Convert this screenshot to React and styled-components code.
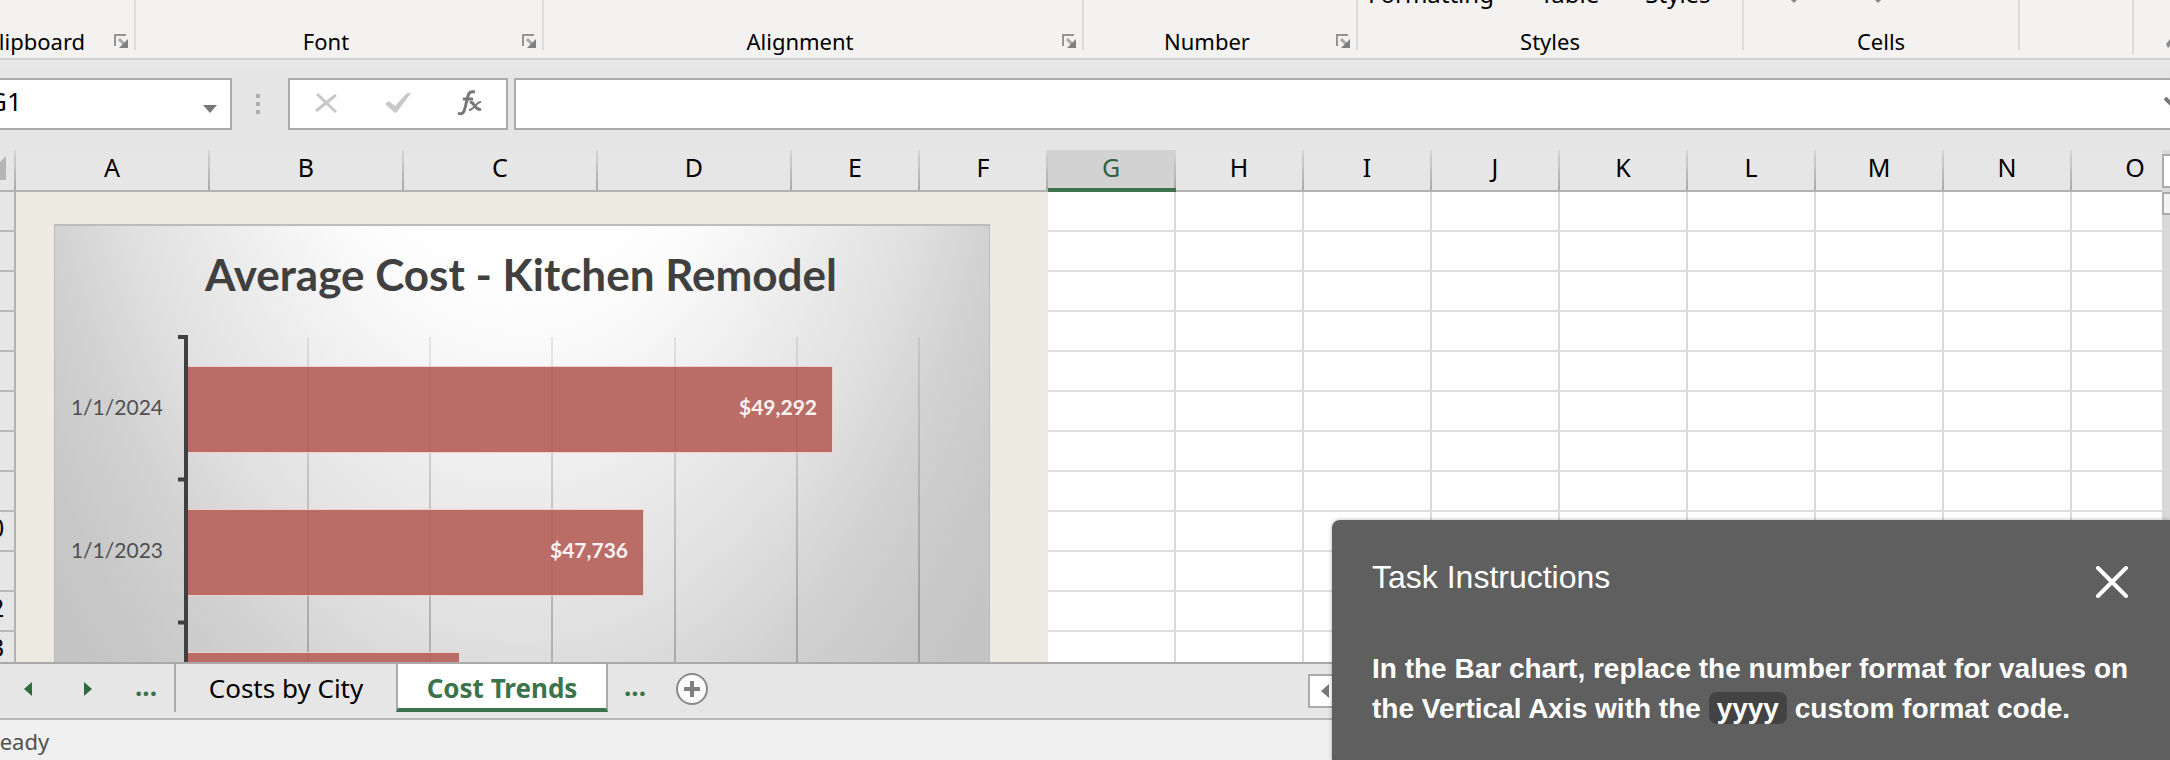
import React from "react";
import styled, { createGlobalStyle, css } from "styled-components";

const GlobalStyle = createGlobalStyle`
  *, *::before, *::after { box-sizing: border-box; }
  html, body, #root { height: 100%; }
  body { margin: 0; overflow: hidden; background: #e6e6e6; }
  body, button, input { font-family: "Noto Sans", sans-serif; color: #000; }
  button { border: 0; padding: 0; background: none; }
  svg { display: block; flex: none; }
`;

const Screen = styled.main`
  position: relative;
  display: flex;
  flex-direction: column;
  height: 100vh;
  overflow: hidden;
`;

const Ribbon = styled.header`
  display: flex;
  flex: none;
  height: 60px;
  background: #f3f2f1;
  border-bottom: 2px solid #d2d2d2;
  overflow: hidden;
`;

const Group = styled.section`
  position: relative;
  flex: none;
  width: ${(p) => p.$width}px;
  height: ${(p) => (p.$tall ? 54 : 50)}px;
  margin-left: ${(p) => (p.$clipped ? -38 : 0)}px;
  border-right: 2px solid #dcdcdc;
  display: flex;
  align-items: flex-end;
`;

const GroupTitle = styled.h2`
  flex: 1;
  margin: 0 0 -6px;
  padding-right: ${(p) => (p.$launcher ? 6 : 0)}px;
  font-size: 22px;
  font-weight: 400;
  line-height: 30px;
  text-align: center;
`;

const Launcher = styled.button`
  width: 20px;
  height: 16px;
  display: flex;
`;

const CommandRow = styled.div`
  position: absolute;
  left: 10px;
  bottom: 40px;
  display: flex;
  gap: 46px;
`;

const Command = styled.button`
  font-size: 24px;
  line-height: 32px;
`;

const MenuMarks = styled.div`
  position: absolute;
  top: 0;
  left: 46px;
  display: flex;
  gap: 76px;
`;

const RibbonEnd = styled.div`
  flex: 1;
  display: flex;
  justify-content: flex-end;
  align-items: flex-end;
  padding-bottom: 10px;
`;

const FormulaBar = styled.div`
  display: flex;
  flex: none;
  height: 90px;
  padding: 18px 0 20px;
  background: linear-gradient(#e9e9e9, #e5e5e5 16px);
`;

const fieldBox = css`
  height: 52px;
  background: #fff;
  border: 2px solid #ababab;
`;

const NameBox = styled.div`
  ${fieldBox}
  flex: none;
  width: 256px;
  margin-left: -24px;
  padding: 0 12px 0 10px;
  display: flex;
  align-items: center;
  justify-content: space-between;
`;

const NameInput = styled.input`
  width: 140px;
  height: 40px;
  margin-bottom: 6px;
  padding: 0;
  border: 0;
  outline: 0;
  background: none;
  font-size: 26px;
`;

const PlainButton = styled.button`
  display: flex;
  align-items: center;
  justify-content: center;
`;

const Grip = styled.div`
  flex: none;
  width: 56px;
  padding-right: 4px;
  display: flex;
  align-items: center;
  justify-content: center;
`;

const EntryButtons = styled.div`
  ${fieldBox}
  flex: none;
  width: 220px;
  padding-bottom: 2px;
  display: grid;
  grid-template-columns: repeat(3, 1fr);
`;

const FormulaField = styled.div`
  ${fieldBox}
  flex: 1;
  margin: 0 -20px 0 6px;
  display: flex;
`;

const FormulaInput = styled.input`
  flex: 1;
  border: 0;
  outline: 0;
  background: none;
  font-size: 26px;
`;

const Workspace = styled.div`
  position: relative;
  flex: 1;
  min-height: 0;
  display: flex;
  overflow: hidden;
  border-bottom: 2px solid #a9a9a9;
`;

const SheetViewport = styled.div`
  position: relative;
  flex: 1;
  min-width: 0;
  overflow: hidden;
`;

const Sheet = styled.table`
  border-collapse: separate;
  border-spacing: 0;
  table-layout: fixed;
  width: 2238px;
  margin-left: -38px;
  background: #fff;
`;

const ColumnHead = styled.th`
  height: 42px;
  padding: 0 2px ${(p) => (p.$active ? 4 : 6)}px 0;
  font-size: 25px;
  font-weight: 400;
  line-height: 34px;
  color: ${(p) => (p.$active ? "#2f6340" : "#000")};
  background: linear-gradient(#d6d6d6, #a8a8a8) right / 2px 100% no-repeat,
    ${(p) => (p.$active ? "#d2d2d2" : "#e6e6e6")};
  border-bottom: ${(p) => (p.$active ? "4px solid #3b734c" : "2px solid #b3b3b3")};
`;

const RowHead = styled.th`
  height: 40px;
  padding: 0 0 8px 4px;
  font-size: 25px;
  font-weight: 400;
  line-height: 30px;
  background: #e6e6e6;
  border-right: 2px solid #b3b3b3;
  border-bottom: 2px solid #b8b8b8;
`;

const Cell = styled.td`
  height: 40px;
  padding: 0;
  ${(p) =>
    p.$shaded
      ? css`
          background: #edeae2;
        `
      : css`
          border-right: 2px solid #dadada;
          border-bottom: 2px solid #dedede;
        `}
`;

const ChartFrame = styled.figure`
  position: absolute;
  left: 54px;
  top: 74px;
  width: 936px;
  height: 560px;
  margin: 0;
  border: 2px solid #bcbcbc;
  border-width: 2px 1px;
  background: radial-gradient(
    ellipse 650px 1240px at 50% -465px,
    #fff 40%,
    #fafafa 47%,
    #f3f3f3 53%,
    #eaeaea 61%,
    #e0e0e0 71%,
    #d2d2d2 81%,
    #c8c8c8 92%,
    #c4c4c4 100%
  );
`;

const ChartTitle = styled.text`
  font: 700 44px Lato, sans-serif;
  fill: #404040;
  text-anchor: middle;
`;

const AxisLabel = styled.text`
  font: 400 21px Lato, sans-serif;
  fill: #505050;
  text-anchor: end;
`;

const BarLabel = styled.text`
  font: 700 21px Lato, sans-serif;
  fill: #fdf3f2;
  text-anchor: end;
`;

const ScrollColumn = styled.div`
  flex: none;
  width: 8px;
  overflow: hidden;
  background: #d9d9d9;
  padding-top: 4px;
  display: flex;
  flex-direction: column;
  gap: 4px;
`;

const ScrollPart = styled.button`
  flex: none;
  width: 34px;
  height: ${(p) => p.$height}px;
  background: ${(p) => (p.$thumb ? "#f3f3f3" : "#fff")};
  border: 2px solid #ababab;
`;

const TabBar = styled.nav`
  display: flex;
  flex: none;
  height: 56px;
  padding: 0 0 6px 14px;
  background: #e6e6e6;
  border-bottom: 2px solid #b8b8b8;
`;

const TabArrow = styled(PlainButton)`
  width: ${(p) => p.$width}px;
  height: 50px;
`;

const More = styled.button`
  width: ${(p) => p.$width}px;
  padding: 0 ${(p) => p.$end || 0}px 4px 0;
  color: #3b734c;
  font-size: 26px;
  font-weight: 700;
  line-height: 44px;
`;

const Tab = styled.button`
  flex: none;
  width: ${(p) => p.$width}px;
  height: 48px;
  font-size: 26px;
  line-height: 40px;
  border-left: 2px solid #ababab;
  ${(p) =>
    p.$active &&
    css`
      height: 50px;
      margin-top: -2px;
      padding-top: 6px;
      background: #fff;
      color: #3b734c;
      font-weight: 700;
      border-right: 2px solid #ababab;
      border-bottom: 4px solid #3b734c;
    `}
`;

const TabSpacer = styled.div`
  flex: 1;
`;

const HorizontalScroll = styled.div`
  flex: none;
  width: 862px;
  padding-top: 10px;
`;

const ScrollLeft = styled(PlainButton)`
  width: 34px;
  height: 34px;
  background: #fff;
  border: 2px solid #ababab;
`;

const StatusBar = styled.footer`
  flex: none;
  height: 40px;
  padding-top: 4px;
  background: #f0f0f0;
  color: #505050;
  font-size: 22px;
  line-height: 34px;
`;

const StatusText = styled.span`
  display: block;
  margin-left: -14px;
`;

const Panel = styled.aside`
  position: absolute;
  right: 0;
  bottom: 0;
  width: 838px;
  height: 240px;
  padding: 36px 42px 0 40px;
  background: #5f5f5f;
  border-top-left-radius: 8px;
  box-shadow: 0 0 4px rgba(0, 0, 0, 0.3);
  color: #fff;
  font-family: "Liberation Sans", Arial, sans-serif;
`;

const PanelHead = styled.div`
  display: flex;
  justify-content: space-between;
  height: 93px;
`;

const PanelTitle = styled.h1`
  margin: 0;
  font-size: 32px;
  font-weight: 400;
  line-height: 42px;
`;

const CloseButton = styled(PlainButton)`
  width: 32px;
  height: 52px;
`;

const Instruction = styled.p`
  margin: 0;
  font-size: 28px;
  font-weight: 700;
  line-height: 40px;
  white-space: nowrap;
`;

const Code = styled.code`
  display: inline-block;
  height: 32px;
  padding: 0 8px;
  line-height: 34px;
  border-radius: 8px;
  background: #434343;
  font-family: inherit;
`;

const LauncherIcon = () => (
  <svg width="14" height="14" viewBox="0 0 14 14">
    <path d="M1 12V1h11" fill="none" stroke="#949494" strokeWidth="2" />
    <path d="M5 5l5 5" stroke="#a8a8a8" strokeWidth="3" />
    <path d="M14 5v9H5z" fill="#808080" />
  </svg>
);

const groups = [
  { title: "Clipboard", width: 174, clipped: true, launcher: true },
  { title: "Font", width: 408, launcher: true },
  { title: "Alignment", width: 540, launcher: true },
  { title: "Number", width: 274, launcher: true },
  { title: "Styles", width: 386, commands: ["Formatting", "Table", "Styles"] },
  { title: "Cells", width: 276, marks: true },
  { title: "", width: 114, tall: true },
];

const columns = [..."ABCDEFGHIJKLMNO"].map((name, i) => ({
  name,
  width: i < 4 ? 194 : 128,
}));
const rows = Array.from({ length: 12 }, (_, i) => i + 2);

const AXIS = 132;
const bars = [
  { date: "1/1/2024", value: "$49,292", y: 143, end: 778 },
  { date: "1/1/2023", value: "$47,736", y: 286, end: 589 },
  { y: 429, end: 405 },
];

function CostChart() {
  return (
    <ChartFrame>
      <svg width="934" height="556" viewBox="1 2 934 556" role="img" aria-label="Average Cost - Kitchen Remodel">
        <defs>
          <linearGradient id="gridline" x1="0" y1="0" x2="0" y2="1">
            <stop offset="0" stopColor="#000" stopOpacity="0.08" />
            <stop offset="0.600" stopColor="#000" stopOpacity="0.2" />
            <stop offset="1" stopColor="#000" stopOpacity="0.24" />
          </linearGradient>
        </defs>
        <ChartTitle x="467" y="67">Average Cost - Kitchen Remodel</ChartTitle>
        {[254, 376, 498, 621, 743, 865].map((x) => (
          <rect key={x} x={x - 1} y="113" width="2" height="445" fill="url(#gridline)" />
        ))}
        {bars.map((b) => (
          <g key={b.y}>
            <rect x={AXIS} y={b.y - 1} width={b.end - AXIS + 1} height="87" fill="#f3cfcc" />
            <rect x={AXIS} y={b.y} width={b.end - AXIS} height="85" fill="#ba6c66" />
            {[254, 376, 498, 621, 743]
              .filter((x) => x < b.end)
              .map((x) => (
                <rect key={x} x={x - 1} y={b.y} width="2" height="85" fill="#000" opacity="0.04" />
              ))}
            {b.date && <AxisLabel x="109" y={b.y + 48}>{b.date}</AxisLabel>}
            {b.value && <BarLabel x={b.end - 15} y={b.y + 48}>{b.value}</BarLabel>}
          </g>
        ))}
        <path d="M124 113h8v445M124 255.500h8M124 398.500h8" fill="none" stroke="#404040" strokeWidth="4" />
      </svg>
    </ChartFrame>
  );
}

export default function App() {
  return (
    <>
      <GlobalStyle />
      <Screen>
        <Ribbon>
          {groups.map((g, i) => (
            <Group key={i} $width={g.width} $tall={g.tall} $clipped={g.clipped}>
              {g.commands && (
                <CommandRow>
                  {g.commands.map((c) => (
                    <Command key={c}>{c}</Command>
                  ))}
                </CommandRow>
              )}
              {g.marks && (
                <MenuMarks>
                  {[0, 1].map((n) => (
                    <svg key={n} width="8" height="3" viewBox="0 0 8 3">
                      <path d="M1 0h6L4 3z" fill="#8a8a8a" />
                    </svg>
                  ))}
                </MenuMarks>
              )}
              {g.title && <GroupTitle $launcher={g.launcher}>{g.title}</GroupTitle>}
              {g.launcher && (
                <Launcher aria-label={`${g.title} settings`}>
                  <LauncherIcon />
                </Launcher>
              )}
            </Group>
          ))}
          <RibbonEnd>
            <svg width="4" height="10" viewBox="0 0 4 10">
              <path d="M0 6l5-6v7l-3 3z" fill="#8a8a8a" />
            </svg>
          </RibbonEnd>
        </Ribbon>

        <FormulaBar>
          <NameBox>
            <NameInput aria-label="Name box" defaultValue="G1" />
            <PlainButton aria-label="Show names">
              <svg width="16" height="20" viewBox="0 0 16 20">
                <path d="M1 11h14l-7 8z" fill="#777" />
              </svg>
            </PlainButton>
          </NameBox>
          <Grip>
            <svg width="4" height="20" viewBox="0 0 4 20">
              <path d="M0 0h4v4H0zM0 8h4v4H0zM0 16h4v4H0z" fill="#adadad" />
            </svg>
          </Grip>
          <EntryButtons>
            <PlainButton aria-label="Cancel">
              <svg width="24" height="24" viewBox="0 0 24 24">
                <path d="M3 3l19 18M22 4L2 20" stroke="#c8c8c8" strokeWidth="3" />
              </svg>
            </PlainButton>
            <PlainButton aria-label="Enter">
              <svg width="26" height="24" viewBox="0 0 26 24">
                <path d="M0 13l4-3 6 5L22 2h4L12 21l-2 1z" fill="#c8c8c8" />
              </svg>
            </PlainButton>
            <PlainButton aria-label="Insert function">
              <svg width="26" height="28" viewBox="0 0 26 28">
                <path d="M1 24c4 2 6 0 7-5l3-12c1-4 3-5 7-4M6 10h10" fill="none" stroke="#777" strokeWidth="3" />
                <path d="M13 14c4-3 5 9 11 6" fill="none" stroke="#777" strokeWidth="3" />
                <path d="M24 13c-4-1-7 8-12 8" fill="none" stroke="#777" strokeWidth="2" />
              </svg>
            </PlainButton>
          </EntryButtons>
          <FormulaField>
            <FormulaInput aria-label="Formula" />
            <PlainButton aria-label="Expand formula bar">
              <svg width="24" height="14" viewBox="0 0 24 14">
                <path d="M1 1l10 10L21 1" fill="none" stroke="#777" strokeWidth="4" />
              </svg>
            </PlainButton>
          </FormulaField>
        </FormulaBar>

        <Workspace>
          <SheetViewport>
            <Sheet>
              <colgroup>
                <col style={{ width: 54 }} />
                {columns.map((c) => (
                  <col key={c.name} style={{ width: c.width }} />
                ))}
              </colgroup>
              <thead>
                <tr>
                  <ColumnHead aria-label="Select all">
                    <svg width="44" height="26" viewBox="0 0 44 26">
                      <path d="M44 2v24H20z" fill="#b5b5b5" />
                    </svg>
                  </ColumnHead>
                  {columns.map((c) => (
                    <ColumnHead key={c.name} $active={c.name === "G"}>
                      {c.name}
                    </ColumnHead>
                  ))}
                </tr>
              </thead>
              <tbody>
                {rows.map((r) => (
                  <tr key={r}>
                    <RowHead>{r}</RowHead>
                    {columns.map((c, i) => (
                      <Cell key={c.name} $shaded={i < 6} />
                    ))}
                  </tr>
                ))}
              </tbody>
            </Sheet>
            <CostChart />
          </SheetViewport>
          <ScrollColumn>
            <ScrollPart $height={34} aria-label="Scroll up" />
            <ScrollPart $height={23} $thumb aria-label="Scroll position" />
          </ScrollColumn>
        </Workspace>

        <TabBar>
          <TabArrow $width={28} aria-label="Previous sheet">
            <svg width="8" height="14" viewBox="0 0 8 14">
              <path d="M8 0v14L0 7z" fill="#2f6b41" />
            </svg>
          </TabArrow>
          <TabArrow $width={92} aria-label="Next sheet">
            <svg width="8" height="14" viewBox="0 0 8 14">
              <path d="M0 0v14l8-7z" fill="#2f6b41" />
            </svg>
          </TabArrow>
          <More $width={40} $end={16}>...</More>
          <Tab $width={222}>Costs by City</Tab>
          <Tab $width={212} $active>
            Cost Trends
          </Tab>
          <More $width={54}>...</More>
          <TabArrow $width={60} aria-label="New sheet">
            <svg width="32" height="32" viewBox="0 0 32 32">
              <circle cx="16" cy="16" r="15" fill="#fafafa" stroke="#8a8a8a" strokeWidth="2" />
              <path d="M16 8v16M8 16h16" stroke="#808080" strokeWidth="4" />
            </svg>
          </TabArrow>
          <TabSpacer />
          <HorizontalScroll>
            <ScrollLeft aria-label="Scroll left">
              <svg width="8" height="14" viewBox="0 0 8 14">
                <path d="M8 0v14L0 7z" fill="#777" />
              </svg>
            </ScrollLeft>
          </HorizontalScroll>
        </TabBar>

        <StatusBar>
          <StatusText>Ready</StatusText>
        </StatusBar>

        <Panel>
          <PanelHead>
            <PanelTitle>Task Instructions</PanelTitle>
            <CloseButton aria-label="Close">
              <svg width="32" height="32" viewBox="0 0 32 32">
                <path d="M2 2l28 28M30 2L2 30" stroke="#fff" strokeWidth="4" strokeLinecap="round" />
              </svg>
            </CloseButton>
          </PanelHead>
          <Instruction>
            In the Bar chart, replace the number format for values on
            <br />
            the Vertical Axis with the <Code>yyyy</Code> custom format code.
          </Instruction>
        </Panel>
      </Screen>
    </>
  );
}
